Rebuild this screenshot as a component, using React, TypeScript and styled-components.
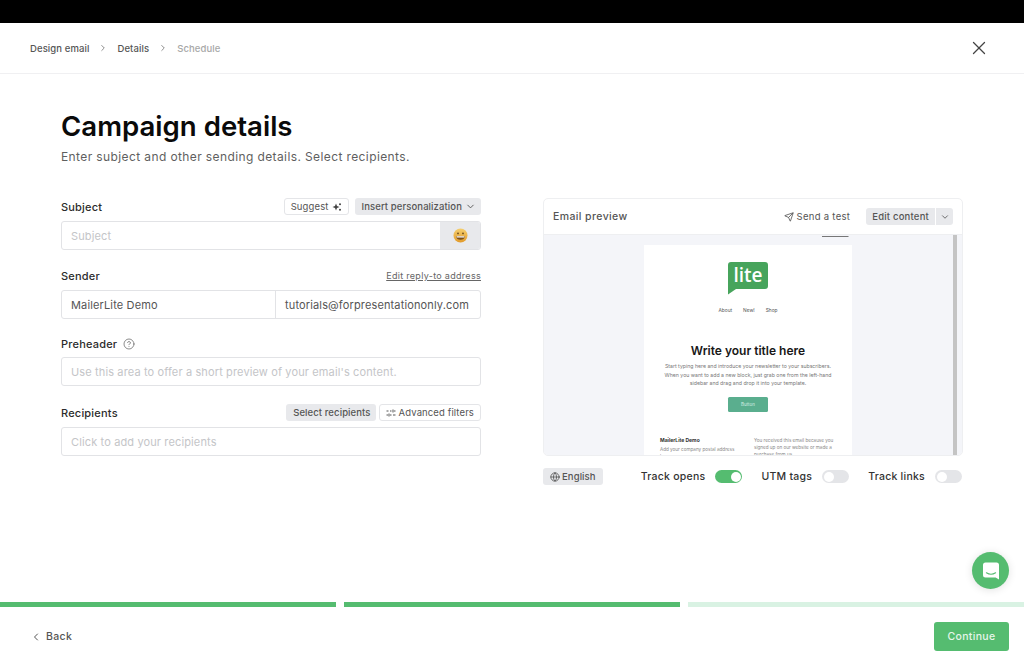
import { ChevronDown, ChevronLeft, ChevronRight, CircleHelp, Globe, Send, X } from 'lucide-react';
import { createGlobalStyle, styled } from 'styled-components';

function App() {
  return (
    <>
      <GlobalStyle />
      <Page>
        <TopBar />
        <Header>
          <Crumbs>
            <Crumb>Design email</Crumb>
            <ChevronRight size={10} color='#777' />
            <Crumb>Details</Crumb>
            <ChevronRight size={10} color='#777' />
            <Crumb $muted>Schedule</Crumb>
          </Crumbs>
          <X size={22} strokeWidth={1.4} color='#444' />
        </Header>

        <Main>
          <Title>Campaign details</Title>
          <Subtitle>Enter subject and other sending details. Select recipients.</Subtitle>

          <Columns>
            <Form>
              <Field>
                <LabelRow>
                  <Label>Subject</Label>
                  <Actions $gap={6}>
                    <OutlineButton>Suggest <SparkleIcon /></OutlineButton>
                    <GreyButton>Insert personalization <ChevronDown size={11} /></GreyButton>
                  </Actions>
                </LabelRow>
                <InputGroup>
                  <InputCell $grow><Placeholder>Subject</Placeholder></InputCell>
                  <EmojiCell><EmojiFace /></EmojiCell>
                </InputGroup>
              </Field>

              <Field>
                <LabelRow>
                  <Label>Sender</Label>
                  <TextLink>Edit reply-to address</TextLink>
                </LabelRow>
                <InputGroup>
                  <InputCell $grow><Value>MailerLite Demo</Value></InputCell>
                  <InputCell $divider><Value>tutorials@forpresentationonly.com</Value></InputCell>
                </InputGroup>
              </Field>

              <Field>
                <LabelRow $short>
                  <LabelWithHelp>
                    <Label>Preheader</Label>
                    <CircleHelp size={12} color='#666' strokeWidth={1.5} />
                  </LabelWithHelp>
                </LabelRow>
                <InputGroup>
                  <InputCell $grow><Placeholder>Use this area to offer a short preview of your email's content.</Placeholder></InputCell>
                </InputGroup>
              </Field>

              <RecipientsField>
                <LabelRow>
                  <Label>Recipients</Label>
                  <Actions $gap={3}>
                    <GreyButton>Select recipients</GreyButton>
                    <OutlineButton><FilterIcon /> Advanced filters</OutlineButton>
                  </Actions>
                </LabelRow>
                <InputGroup>
                  <InputCell $grow><Placeholder>Click to add your recipients</Placeholder></InputCell>
                </InputGroup>
              </RecipientsField>
            </Form>

            <Side>
              <PreviewCard>
                <PreviewHeader>
                  <PreviewTitle>Email preview</PreviewTitle>
                  <PreviewTools>
                    <SendTest><Send size={10} /> Send a test</SendTest>
                    <SplitButton>
                      <SplitMain>Edit content</SplitMain>
                      <SplitCaret><ChevronDown size={10} /></SplitCaret>
                    </SplitButton>
                  </PreviewTools>
                </PreviewHeader>
                <PreviewBody>
                  <ViewLink>View in browser</ViewLink>
                  <EmailSheet>
                    <LiteLogo />
                    <EmailNav>
                      <span>About</span>
                      <span>New!</span>
                      <span>Shop</span>
                    </EmailNav>
                    <EmailTitle>Write your title here</EmailTitle>
                    <EmailText>
                      Start typing here and introduce your newsletter to your subscribers.
                      When you want to add a new block, just grab one from the left-hand
                      sidebar and drag and drop it into your template.
                    </EmailText>
                    <EmailButton>Button</EmailButton>
                    <EmailFooter>
                      <FooterAddress>
                        <FooterName>MailerLite Demo</FooterName>
                        <FooterText>Add your company postal address here</FooterText>
                      </FooterAddress>
                      <FooterText>You received this email because you signed up on our website or made a purchase from us.</FooterText>
                    </EmailFooter>
                  </EmailSheet>
                  <ScrollThumb />
                </PreviewBody>
              </PreviewCard>

              <Options>
                <LangChip><Globe size={10} /> English</LangChip>
                <ToggleGroup>
                  <ToggleItem>Track opens <Toggle $on /></ToggleItem>
                  <ToggleItem>UTM tags <Toggle /></ToggleItem>
                  <ToggleItem>Track links <Toggle /></ToggleItem>
                </ToggleGroup>
              </Options>
            </Side>
          </Columns>
        </Main>

        <ChatBubble>
          <svg width='18' height='18' viewBox='0 0 18 18' fill='none'>
            <path d='M3.500 .5h11A2.500 2.500 0 0 1 17 3v14.500l-3.400-2H3.500A2.500 2.500 0 0 1 1 13V3A2.500 2.500 0 0 1 3.500 .5Z' fill='#fff' />
            <path d='M4.400 10.800c2.700 1.700 6.500 1.700 9.200 0' stroke='#55bc70' strokeWidth='1.100' strokeLinecap='round' />
          </svg>
        </ChatBubble>

        <Progress>
          <ProgressStep $done />
          <ProgressStep $done />
          <ProgressStep />
        </Progress>
        <Footer>
          <BackLink><ChevronLeft size={12} /> Back</BackLink>
          <ContinueButton>Continue</ContinueButton>
        </Footer>
      </Page>
    </>
  )
}

function SparkleIcon() {
  return (
    <svg width='10' height='10' viewBox='0 0 10 10' fill='#444'>
      <path d='M4 1.500 5 4l2.500 1L5 6 4 8.500 3 6 .5 5 3 4Z' />
      <circle cx='8' cy='2.200' r='1' />
      <circle cx='8' cy='7.800' r='1' />
    </svg>
  )
}

function FilterIcon() {
  return (
    <svg width='10' height='10' viewBox='0 0 10 10' stroke='#555' strokeWidth='1' fill='none'>
      <path d='M.5 3h2M4 3h1.500M7 1.500v3M8 3h1.500M.5 7h1.500M3 5.500v3M4 7h1.500M7 7h2.500' />
    </svg>
  )
}

function EmojiFace() {
  return (
    <svg width='15' height='15' viewBox='0 0 15 15'>
      <defs>
        <linearGradient id='face' x1='0' y1='0' x2='0' y2='1'>
          <stop offset='0' stopColor='#f5cf6e' />
          <stop offset='1' stopColor='#e29a2a' />
        </linearGradient>
      </defs>
      <circle cx='7.500' cy='7.500' r='7' fill='url(#face)' />
      <circle cx='5' cy='5.400' r='.9' fill='#6b4a1c' />
      <circle cx='10' cy='5.400' r='.9' fill='#6b4a1c' />
      <path d='M3 8h9c-.3 2.700-2.100 3.800-4.500 3.800S3.300 10.700 3 8Z' fill='#7a4f1a' />
      <path d='M3.400 8.200h8.200l-.3 1.300H3.700Z' fill='#fff' />
    </svg>
  )
}

function LiteLogo() {
  return (
    <LogoWrap>
      <svg width='40' height='33' viewBox='0 0 40 33'>
        <path d='M3 0h34a3 3 0 0 1 3 3v21a3 3 0 0 1-3 3H8l-8 5.500V3a3 3 0 0 1 3-3Z' fill='#47a45c' />
        <text x='20' y='20' textAnchor='middle' fontFamily='"Open Sans", sans-serif' fontSize='19' fontWeight='600' fill='#fff'>lite</text>
      </svg>
    </LogoWrap>
  )
}

export default App

const GlobalStyle = createGlobalStyle`
  html, body {
    margin: 0;
    padding: 0;
    background: #fff;
  }
  body {
    font-family: Inter, "Liberation Sans", sans-serif;
    color: #333;
  }
  * {
    box-sizing: border-box;
  }
`

const Page = styled.div`
  position: relative;
  display: flex;
  flex-direction: column;
  width: 1024px;
  height: 666px;
  overflow: hidden;
`

const TopBar = styled.div`
  height: 23px;
  background: #000;
  flex-shrink: 0;
`

const Header = styled.header`
  display: flex;
  align-items: center;
  justify-content: space-between;
  height: 51px;
  padding: 0 34px 0 30px;
  border-bottom: 1px solid #f0f0f2;
  flex-shrink: 0;
`

const Crumbs = styled.nav`
  display: flex;
  align-items: center;
  gap: 9px;
`

const Crumb = styled.span<{ $muted?: boolean }>`
  font-size: 9.500px;
  font-weight: 500;
  letter-spacing: 0.1px;
  color: ${p => (p.$muted ? '#a8a8a8' : '#555')};
`

const Main = styled.main`
  flex: 1;
  padding: 34px 61px 0;
`

const Title = styled.h1`
  margin: 0;
  font-size: 27.600px;
  line-height: 36px;
  font-weight: 600;
  color: #0a0a0a;
`

const Subtitle = styled.p`
  margin: 4px 0 0;
  font-size: 12px;
  line-height: 18px;
  letter-spacing: 0.39px;
  color: #5f5f5f;
`

const Columns = styled.div`
  display: flex;
  justify-content: space-between;
  margin-top: 32px;
`

const Form = styled.div`
  display: flex;
  flex-direction: column;
  gap: 17px;
  width: 420px;
`

const Field = styled.div`
  display: flex;
  flex-direction: column;
  gap: 6px;
`

const RecipientsField = styled(Field)`
  margin-top: 1px;
`

const LabelRow = styled.div<{ $short?: boolean }>`
  display: flex;
  align-items: center;
  justify-content: space-between;
  height: ${p => (p.$short ? '15px' : '17px')};
`

const Label = styled.span`
  font-size: 11px;
  font-weight: 500;
  letter-spacing: 0.2px;
  color: #2c2c2c;
`

const LabelWithHelp = styled.div`
  display: flex;
  align-items: center;
  gap: 6px;
`

const Actions = styled.div<{ $gap: number }>`
  display: flex;
  gap: ${p => p.$gap}px;
`

const OutlineButton = styled.div`
  display: flex;
  align-items: center;
  gap: 3px;
  height: 17px;
  padding: 0 6px;
  border: 1px solid #e4e5e8;
  border-radius: 3px;
  font-size: 9.500px;
  letter-spacing: 0.12px;
  color: #555;
`

const GreyButton = styled.div`
  display: flex;
  align-items: center;
  gap: 3px;
  height: 17px;
  padding: 0 5px 0 7px;
  border-radius: 3px;
  background: #e8e9ec;
  font-size: 9.500px;
  font-weight: 500;
  letter-spacing: 0.1px;
  color: #555;
`

const TextLink = styled.span`
  font-size: 9px;
  letter-spacing: 0.3px;
  color: #666;
  text-decoration: underline;
`

const InputGroup = styled.div`
  display: flex;
  height: 29px;
  border: 1px solid #e2e3e6;
  border-radius: 3px;
  overflow: hidden;
`

const InputCell = styled.div<{ $grow?: boolean; $divider?: boolean }>`
  display: flex;
  align-items: center;
  flex: ${p => (p.$grow ? 1 : 'none')};
  width: ${p => (p.$divider ? '205px' : 'auto')};
  padding: 0 9px;
  border-left: ${p => (p.$divider ? '1px solid #e2e3e6' : 'none')};
`

const Placeholder = styled.span`
  font-size: 11px;
  letter-spacing: 0.13px;
  color: #c4c5c8;
`

const Value = styled.span`
  font-size: 11px;
  letter-spacing: 0.14px;
  color: #555;
`

const EmojiCell = styled.div`
  display: flex;
  align-items: center;
  justify-content: center;
  width: 40px;
  background: #e8e9ec;
`

const Side = styled.div`
  display: flex;
  flex-direction: column;
  gap: 12px;
  width: 420px;
`

const PreviewCard = styled.section`
  display: flex;
  flex-direction: column;
  height: 258px;
  border: 1px solid #eeeff1;
  border-radius: 5px;
  overflow: hidden;
`

const PreviewHeader = styled.div`
  display: flex;
  align-items: center;
  justify-content: space-between;
  height: 36px;
  padding: 0 9px;
  border-bottom: 1px solid #eeeff1;
  flex-shrink: 0;
`

const PreviewTitle = styled.span`
  font-size: 10.500px;
  font-weight: 500;
  letter-spacing: 0.4px;
  color: #555;
`

const PreviewTools = styled.div`
  display: flex;
  align-items: center;
  gap: 16px;
`

const SendTest = styled.span`
  display: flex;
  align-items: center;
  gap: 3px;
  font-size: 9.500px;
  letter-spacing: 0.3px;
  color: #555;
`

const SplitButton = styled.div`
  display: flex;
  gap: 1px;
`

const SplitMain = styled.span`
  display: flex;
  align-items: center;
  height: 17px;
  padding: 0 6px;
  background: #e8e9ec;
  border-radius: 3px 0 0 3px;
  font-size: 9.500px;
  font-weight: 500;
  letter-spacing: 0.2px;
  color: #555;
`

const SplitCaret = styled.span`
  display: flex;
  align-items: center;
  justify-content: center;
  width: 17px;
  height: 17px;
  background: #e8e9ec;
  border-radius: 0 3px 3px 0;
  color: #555;
`

const PreviewBody = styled.div`
  position: relative;
  flex: 1;
  background: #f4f5f9;
  overflow: hidden;
`

const ViewLink = styled.div`
  position: absolute;
  top: -3px;
  left: 278px;
  font-size: 3.500px;
  color: #777;
  text-decoration: underline;
`

const ScrollThumb = styled.div`
  position: absolute;
  top: 0;
  right: 5px;
  bottom: 0;
  width: 4px;
  background: #c4c4c4;
`

const EmailSheet = styled.div`
  display: flex;
  flex-direction: column;
  align-items: center;
  width: 208px;
  height: 240px;
  margin: 10px 0 0 100px;
  background: #fff;
`

const LogoWrap = styled.div`
  display: flex;
  margin-top: 17px;
`

const EmailNav = styled.div`
  display: flex;
  gap: 11px;
  margin-top: 12px;
  font-size: 4.800px;
  line-height: 6px;
  color: #555;
`

const EmailTitle = styled.h2`
  margin: 31px 0 0;
  font-size: 12px;
  line-height: 14px;
  font-weight: 600;
  color: #171717;
`

const EmailText = styled.p`
  margin: 4px 0 0;
  width: 178px;
  font-size: 5.200px;
  line-height: 8.500px;
  text-align: center;
  color: #777;
`

const EmailButton = styled.div`
  display: flex;
  align-items: center;
  justify-content: center;
  width: 40px;
  height: 15px;
  margin-top: 9px;
  border-radius: 1.500px;
  background: #5aae8e;
  font-size: 4.500px;
  color: #d8efe6;
`

const EmailFooter = styled.div`
  display: grid;
  grid-template-columns: 94px 82px;
  width: 176px;
  margin-top: 25px;
`

const FooterAddress = styled.div`
  padding-right: 14px;
`

const FooterName = styled.div`
  margin-bottom: 3px;
  font-size: 5px;
  line-height: 6px;
  font-weight: 700;
  color: #333;
`

const FooterText = styled.div`
  font-size: 4.600px;
  line-height: 7px;
  color: #888;
`

const Options = styled.div`
  display: flex;
  align-items: center;
  justify-content: space-between;
  padding-right: 1px;
`

const LangChip = styled.span`
  display: flex;
  align-items: center;
  gap: 2px;
  height: 17px;
  padding: 0 7px;
  border-radius: 3px;
  background: #e8e9ec;
  font-size: 9.500px;
  font-weight: 500;
  letter-spacing: 0.1px;
  color: #555;
`

const ToggleGroup = styled.div`
  display: flex;
  gap: 19px;
`

const ToggleItem = styled.div`
  display: flex;
  align-items: center;
  gap: 10px;
  font-size: 10.500px;
  font-weight: 500;
  letter-spacing: 0.25px;
  color: #333;
`

const Toggle = styled.span<{ $on?: boolean }>`
  position: relative;
  display: block;
  width: 27px;
  height: 13px;
  border-radius: 7px;
  background: ${p => (p.$on ? '#55bc70' : '#e4e5e8')};

  &::after {
    content: '';
    position: absolute;
    top: 1.500px;
    left: ${p => (p.$on ? '15.500px' : '1.500px')};
    width: 10px;
    height: 10px;
    border-radius: 50%;
    background: #fff;
  }
`

const ChatBubble = styled.div`
  position: absolute;
  left: 972px;
  top: 552px;
  display: flex;
  align-items: center;
  justify-content: center;
  width: 37px;
  height: 37px;
  border-radius: 50%;
  background: #55bc70;
  box-shadow: 0 1px 8px rgba(0, 0, 0, 0.12);
`

const Progress = styled.div`
  display: flex;
  gap: 8px;
  flex-shrink: 0;
`

const ProgressStep = styled.div<{ $done?: boolean }>`
  flex: 1;
  height: 5px;
  background: ${p => (p.$done ? '#55bc70' : '#d9f2e3')};
`

const Footer = styled.footer`
  display: flex;
  align-items: center;
  justify-content: space-between;
  height: 59px;
  padding: 0 15px 0 30px;
  flex-shrink: 0;
`

const BackLink = styled.span`
  display: flex;
  align-items: center;
  gap: 4px;
  font-size: 10.500px;
  font-weight: 500;
  letter-spacing: 0.35px;
  color: #555;
`

const ContinueButton = styled.div`
  display: flex;
  align-items: center;
  justify-content: center;
  width: 75px;
  height: 29px;
  border-radius: 3px;
  background: #55bc70;
  font-size: 10.500px;
  font-weight: 500;
  letter-spacing: 0.3px;
  color: #e6f6ea;
`
